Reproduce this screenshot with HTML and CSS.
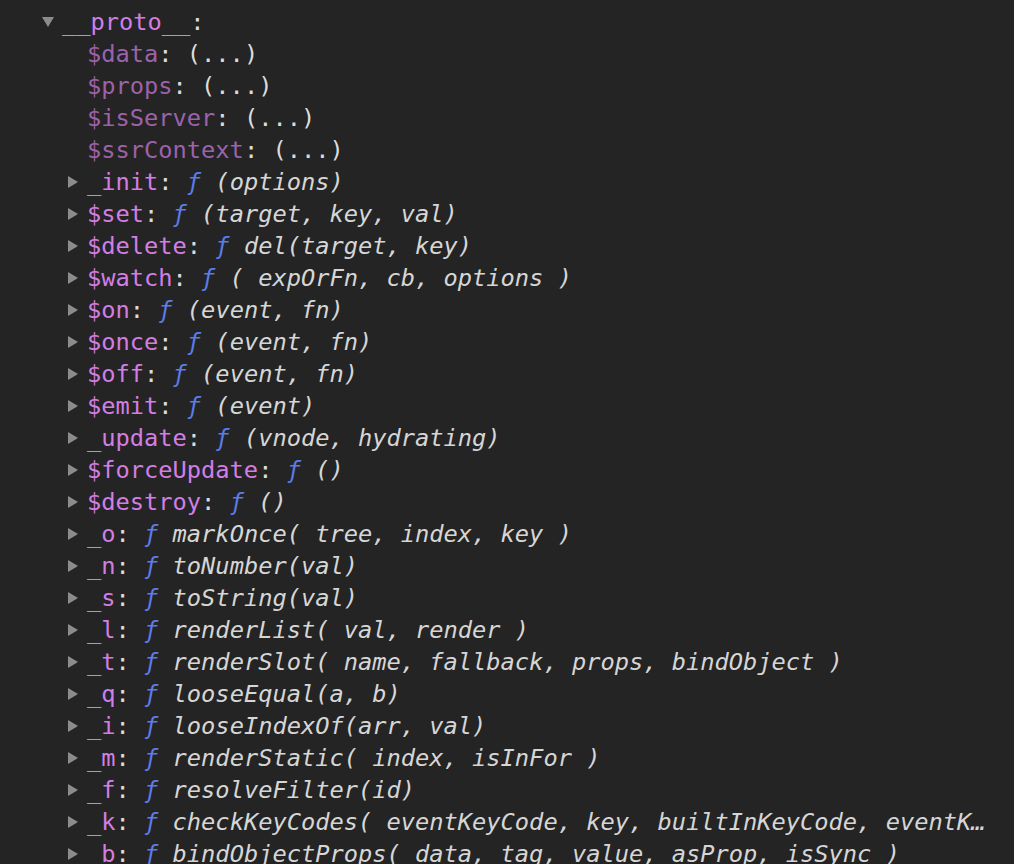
FILE: index.html
```html
<!DOCTYPE html>
<html>
<head>
<meta charset="utf-8">
<link rel="stylesheet" href="styles.css">
</head>
<body>
<div class="tree">
  <div class="row child cut"><span class="tri none"></span><span class="key">$create</span><span class="p">: </span><span class="f">ƒ</span><span class="args"> normalizes, data, node</span></div>
  <div class="row proto"><span class="tri down"></span><span class="key">__proto__</span><span class="p">:</span></div>
  <div class="row child"><span class="tri none"></span><span class="key dim">$data</span><span class="p">: (...)</span></div>
  <div class="row child"><span class="tri none"></span><span class="key dim">$props</span><span class="p">: (...)</span></div>
  <div class="row child"><span class="tri none"></span><span class="key dim">$isServer</span><span class="p">: (...)</span></div>
  <div class="row child"><span class="tri none"></span><span class="key dim">$ssrContext</span><span class="p">: (...)</span></div>
  <div class="row child"><span class="tri right"></span><span class="key">_init</span><span class="p">: </span><span class="f">ƒ</span><span class="args"> (options)</span></div>
  <div class="row child"><span class="tri right"></span><span class="key">$set</span><span class="p">: </span><span class="f">ƒ</span><span class="args"> (target, key, val)</span></div>
  <div class="row child"><span class="tri right"></span><span class="key">$delete</span><span class="p">: </span><span class="f">ƒ</span><span class="args"> del(target, key)</span></div>
  <div class="row child"><span class="tri right"></span><span class="key">$watch</span><span class="p">: </span><span class="f">ƒ</span><span class="args"> ( expOrFn, cb, options )</span></div>
  <div class="row child"><span class="tri right"></span><span class="key">$on</span><span class="p">: </span><span class="f">ƒ</span><span class="args"> (event, fn)</span></div>
  <div class="row child"><span class="tri right"></span><span class="key">$once</span><span class="p">: </span><span class="f">ƒ</span><span class="args"> (event, fn)</span></div>
  <div class="row child"><span class="tri right"></span><span class="key">$off</span><span class="p">: </span><span class="f">ƒ</span><span class="args"> (event, fn)</span></div>
  <div class="row child"><span class="tri right"></span><span class="key">$emit</span><span class="p">: </span><span class="f">ƒ</span><span class="args"> (event)</span></div>
  <div class="row child"><span class="tri right"></span><span class="key">_update</span><span class="p">: </span><span class="f">ƒ</span><span class="args"> (vnode, hydrating)</span></div>
  <div class="row child"><span class="tri right"></span><span class="key">$forceUpdate</span><span class="p">: </span><span class="f">ƒ</span><span class="args"> ()</span></div>
  <div class="row child"><span class="tri right"></span><span class="key">$destroy</span><span class="p">: </span><span class="f">ƒ</span><span class="args"> ()</span></div>
  <div class="row child"><span class="tri right"></span><span class="key">_o</span><span class="p">: </span><span class="f">ƒ</span><span class="args"> markOnce( tree, index, key )</span></div>
  <div class="row child"><span class="tri right"></span><span class="key">_n</span><span class="p">: </span><span class="f">ƒ</span><span class="args"> toNumber(val)</span></div>
  <div class="row child"><span class="tri right"></span><span class="key">_s</span><span class="p">: </span><span class="f">ƒ</span><span class="args"> toString(val)</span></div>
  <div class="row child"><span class="tri right"></span><span class="key">_l</span><span class="p">: </span><span class="f">ƒ</span><span class="args"> renderList( val, render )</span></div>
  <div class="row child"><span class="tri right"></span><span class="key">_t</span><span class="p">: </span><span class="f">ƒ</span><span class="args"> renderSlot( name, fallback, props, bindObject )</span></div>
  <div class="row child"><span class="tri right"></span><span class="key">_q</span><span class="p">: </span><span class="f">ƒ</span><span class="args"> looseEqual(a, b)</span></div>
  <div class="row child"><span class="tri right"></span><span class="key">_i</span><span class="p">: </span><span class="f">ƒ</span><span class="args"> looseIndexOf(arr, val)</span></div>
  <div class="row child"><span class="tri right"></span><span class="key">_m</span><span class="p">: </span><span class="f">ƒ</span><span class="args"> renderStatic( index, isInFor )</span></div>
  <div class="row child"><span class="tri right"></span><span class="key">_f</span><span class="p">: </span><span class="f">ƒ</span><span class="args"> resolveFilter(id)</span></div>
  <div class="row child"><span class="tri right"></span><span class="key">_k</span><span class="p">: </span><span class="f">ƒ</span><span class="args"> checkKeyCodes( eventKeyCode, key, builtInKeyCode, eventK…</span></div>
  <div class="row child"><span class="tri right"></span><span class="key">_b</span><span class="p">: </span><span class="f">ƒ</span><span class="args"> bindObjectProps( data, tag, value, asProp, isSync )</span></div>
</div>
</body>
</html>
```

FILE: styles.css
```css
html, body {
  margin: 0;
  padding: 0;
  background: #242424;
  height: 100%;
  overflow: hidden;
}

.tree {
  margin-top: -29px;
  font-family: "DejaVu Sans Mono", "Liberation Mono", monospace;
  font-size: 23.7px;
  color: #dadada;
}

.row {
  display: flex;
  align-items: center;
  height: 32px;
  line-height: 32px;
  white-space: pre;
  overflow: hidden;
}

.row.cut {
  margin-bottom: 3px;
}

.row.proto {
  padding-left: 42px;
}

.row.child {
  padding-left: 68px;
}

.tri {
  flex: none;
  width: 0;
  height: 0;
}

.tri.down {
  border-left: 6px solid transparent;
  border-right: 6px solid transparent;
  border-top: 10px solid #8c8c8c;
  margin-right: 8px;
  margin-top: -1px;
}

.tri.right {
  border-top: 6px solid transparent;
  border-bottom: 6px solid transparent;
  border-left: 10px solid #8c8c8c;
  margin-right: 9px;
}

.tri.none {
  width: 19px;
}

.key {
  color: #d37ee4;
}

.key.dim {
  color: #9c62aa;
}

.p {
  color: #dcdcdc;
}

.f {
  color: #5c7ce8;
  font-style: italic;
}

.args {
  color: #d6d6d6;
  font-style: italic;
}
```
